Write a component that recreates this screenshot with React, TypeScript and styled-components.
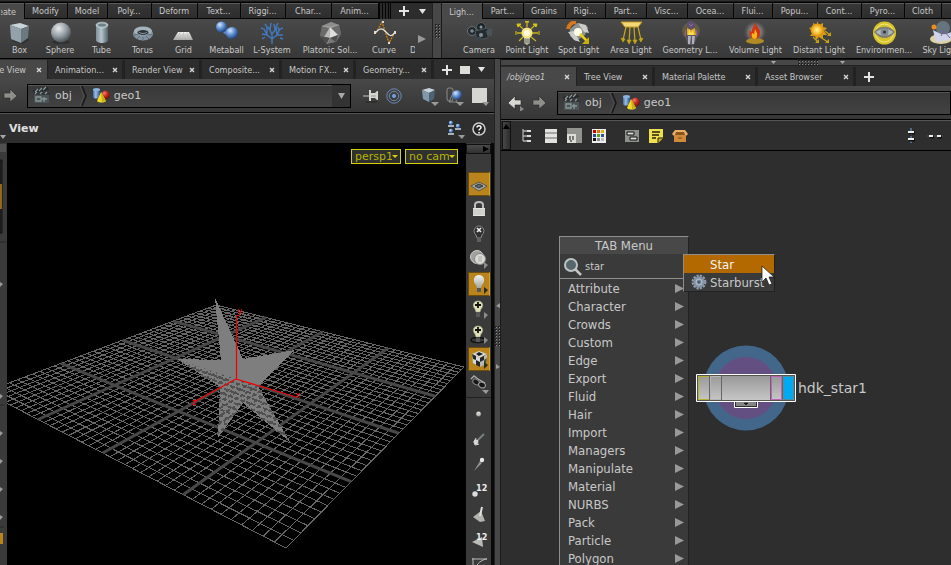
import React from 'react';
import styled, { createGlobalStyle, css } from 'styled-components';

const Global = createGlobalStyle`
  * { box-sizing: border-box; }
  html, body, #root { height: 100%; }
  body {
    margin: 0;
    overflow: hidden;
    background: #2e2e2e;
    color: #c8c8c8;
    font-family: "DejaVu Sans Condensed", "DejaVu Sans", sans-serif;
    font-size: 9px;
  }
  button, input, select { font: inherit; color: inherit; margin: 0; padding: 0; border: 0; background: none; }
  svg { display: block; flex: none; }
`;

/* ---------- frame ---------- */
const Frame = styled.div`
  height: 100vh;
  display: flex;
  flex-direction: column;
  overflow: hidden;
  background: #000;
`;
const Shelves = styled.div`
  flex: none;
  height: 59px;
  padding-top: 3px;
  border-bottom: 1px solid #000;
  background: linear-gradient(#2f302f 0 1px, #000 2px 3px, #000);
  display: grid;
  grid-template-columns: minmax(0, 432fr) 10px minmax(0, 509fr);
`;
const Shelf = styled.section`
  min-width: 0;
  display: flex;
  flex-direction: column;
  overflow: hidden;
`;
const ShelfTabs = styled.div`
  flex: none;
  height: 16px;
  display: flex;
  gap: 1px;
  background: #050505;
`;
const ShelfTab = styled.button<{ $w: number; $on?: boolean; $end?: boolean }>`
  flex: 0 0 ${p => p.$w}px;
  overflow: hidden;
  white-space: nowrap;
  display: flex;
  align-items: center;
  justify-content: ${p => (p.$end ? 'flex-end' : 'center')};
  padding-right: ${p => (p.$end ? 8 : 2)}px;
  border-top: 1px solid #5c5c5c;
  border-left: 1px solid ${p => (p.$on ? '#4b4b4b' : '#343434')};
  background: ${p => (p.$on ? '#494949' : 'linear-gradient(#363636, #2d2d2d)')};
  margin-bottom: ${p => (p.$on ? 0 : 1)}px;
`;
const TabGrip = styled.span`
  flex: 0 0 11px;
  background: repeating-linear-gradient(90deg, #050505 0 1px, #2a2a2a 1px 3px);
`;
const TabActions = styled.div`
  flex: 1;
  display: flex;
  align-items: center;
  gap: 10px;
  padding-left: 8px;
  background: #2c2c2c;
`;
const ShelfBody = styled.div<{ $pad?: number }>`
  flex: 1;
  display: flex;
  padding-left: ${p => p.$pad ?? 0}px;
  background: linear-gradient(#494949, #383838);
`;
const Tool = styled.button<{ $w: number }>`
  flex: 0 0 ${p => p.$w}px;
  display: flex;
  flex-direction: column;
  align-items: center;
  padding-top: 2px;
  white-space: nowrap;
  line-height: 10px;
`;
const CutTool = styled.span`
  width: 5px;
  margin-left: 7px;
  padding-top: 26px;
  line-height: 10px;
  overflow: hidden;
`;
const MoreButton = styled.button`
  display: flex;
  align-items: center;
  padding-left: 3px;
`;
const Splitter = styled.div<{ $h?: boolean }>`
  display: flex;
  flex-direction: ${p => (p.$h ? 'row' : 'column')};
  align-items: center;
  background: #474747;
  ${p => p.$h
    ? css`flex: none; height: 7px; gap: 22px; padding-left: 60%; border-top: 1px solid #111; border-bottom: 1px solid #222;`
    : css`justify-content: center; gap: 18px; border-left: 1px solid #222; border-right: 1px solid #1a1a1a;`}
`;
const PaneSplitter = styled(Splitter)`
  padding-top: 48px;
`;
const Workspace = styled.div`
  flex: 1;
  min-height: 0;
  display: grid;
  grid-template-columns: minmax(0, 494fr) 7px minmax(0, 450fr);
`;
const Pane = styled.section`
  min-width: 0;
  min-height: 0;
  display: flex;
  flex-direction: column;
  overflow: hidden;
`;

/* ---------- pane tabs ---------- */
const PaneTabs = styled.div`
  flex: none;
  height: 20px;
  padding-top: 1px;
  display: flex;
  background: #2d2d2d;
`;
const PaneTab = styled.div<{ $w: number; $on?: boolean; $end?: boolean }>`
  flex: 0 0 ${p => p.$w}px;
  display: flex;
  align-items: center;
  justify-content: space-between;
  overflow: hidden;
  white-space: nowrap;
  padding: 0 4px 0 7px;
  border-right: 3px solid #222;
  background: ${p => (p.$on ? '#484848' : '#2d2d2d')};
  ${p => p.$on && css`border-right-width: 1px; padding-left: 6px; padding-right: 6px;`}
  ${p => p.$end && css`justify-content: flex-end; gap: 10px; padding-left: 0; padding-right: 5px;`}
`;
const TabLabel = styled.button<{ $italic?: boolean }>`
  white-space: nowrap;
  font-style: ${p => (p.$italic ? 'italic' : 'normal')};
`;
const IconButton = styled.button`
  display: flex;
  align-items: center;
  justify-content: center;
  flex: none;
`;
const PaneActions = styled.div`
  display: flex;
  align-items: center;
  gap: 8px;
  padding-left: 8px;
`;

/* ---------- path bar ---------- */
const PathBar = styled.div`
  flex: none;
  height: 34px;
  display: flex;
  align-items: center;
  background: linear-gradient(#484848, #363636);
  border-bottom: 1px solid #000;
`;
const PathField = styled.div`
  flex: 1;
  min-width: 0;
  height: 24px;
  display: flex;
  align-items: stretch;
  border: 1px solid #000;
  box-shadow: inset 0 1px 0 #555;
  background: linear-gradient(#383838, #424242);
  font-family: "DejaVu Sans", sans-serif;
  font-size: 11px;
`;
const Crumb = styled.button`
  display: flex;
  align-items: center;
  gap: 4px;
  padding: 0 0 1px 4px;
`;
const CrumbGap = styled.span`
  padding-left: 6px;
`;
const PathDrop = styled.button`
  margin-left: auto;
  width: 18px;
  display: flex;
  align-items: center;
  justify-content: center;
  background: #333;
`;
const PathIcons = styled.div`
  display: flex;
  align-items: center;
  gap: 7px;
  padding: 0 5px 0 12px;
`;
const IconGap = styled.span`
  width: 5px;
`;
const ArrowPair = styled.div<{ $single?: boolean }>`
  display: flex;
  gap: 6px;
  padding: ${p => (p.$single ? '0 7px 0 2px' : '0 8px 0 6px')};
`;
const ToolRow = styled.div`
  flex: none;
  height: 30px;
  display: flex;
  align-items: center;
  background: #2e2e2e;
  border-top: 1px solid #555;
  overflow: hidden;
`;
const TitlePad = styled.span`
  flex: 0 0 9px;
  align-self: flex-end;
  padding-bottom: 4px;
`;
const ViewTitle = styled.h1`
  margin: 0;
  flex: 1;
  font-family: "DejaVu Sans", sans-serif;
  font-size: 11px;
  font-weight: bold;
  color: #e0e0e0;
`;
const ViewTools = styled.div`
  display: flex;
  align-items: center;
  gap: 7px;
  padding-right: 8px;
`;

/* ---------- viewport ---------- */
const ViewRow = styled.div`
  flex: 1;
  min-height: 0;
  display: flex;
  border-right: 3px solid #080808;
`;
const LeftStrip = styled.div`
  flex: 0 0 7px;
  background: #3a3a3a;
  overflow: hidden;
`;
const Viewport = styled.div`
  flex: 1;
  min-width: 0;
  position: relative;
  background: #000;
  & > svg { width: 100%; height: 100%; }
`;
const CameraBar = styled.div`
  position: absolute;
  top: 6px;
  right: 8px;
  display: flex;
  gap: 4px;
`;
const CameraBox = styled.label<{ $w: number }>`
  width: ${p => p.$w}px;
  height: 15px;
  display: flex;
  align-items: center;
  border: 1px solid #d2d200;
  background: #303030;
  color: #b4b400;
  font-family: "DejaVu Sans", sans-serif;
  font-size: 11px;
  padding: 0 2px 0 3px;
  select { appearance: none; flex: 1; min-width: 0; height: 13px; line-height: 13px; outline: 0; overflow: visible; }
`;
const DisplayStrip = styled.div`
  flex: 0 0 25px;
  display: flex;
  flex-direction: column;
  align-items: center;
  background: #3a3a3a;
  overflow: hidden;
`;
const StripCap = styled.button`
  flex: none;
  align-self: stretch;
  height: 10px;
  margin: 1px 0 18px;
  display: flex;
  justify-content: flex-end;
  align-items: center;
  padding-right: 1px;
  border: 1px solid #111;
  background: linear-gradient(#4a4a4a, #303030);
`;
const StripButton = styled.button<{ $on?: boolean }>`
  flex: none;
  width: 22px;
  height: 24px;
  margin-bottom: 1px;
  display: flex;
  align-items: center;
  justify-content: center;
  ${p => p.$on && css`background: #b9841b; border: 1px solid #6e4c0a; border-right-color: #dca030;`}
`;
const StripLine = styled.hr`
  flex: none;
  align-self: stretch;
  margin: 0 0 4px;
  border: 0;
  border-top: 1px solid #222;
`;

/* ---------- network ---------- */
const RowHandle = styled.button`
  flex: 0 0 9px;
  align-self: stretch;
  margin-left: 1px;
  padding-top: 2px;
  display: flex;
  align-items: flex-start;
  justify-content: center;
  border: 1px solid #111;
  background: linear-gradient(90deg, #484848, #2c2c2c);
`;
const ToolGroup = styled.div<{ $left: number }>`
  display: flex;
  align-items: center;
  gap: 8px;
  margin-left: ${p => p.$left}px;
`;
const RightGroup = styled.div`
  display: flex;
  gap: 8px;
  margin-left: auto;
  padding-right: 8px;
`;
const Network = styled.div`
  flex: 1;
  min-height: 0;
  position: relative;
  overflow: hidden;
  border-top: 1px solid #000;
  background: #2e2e2e;
`;
const Node = styled.div`
  position: absolute;
  left: 195px;
  top: 193px;
  display: flex;
  align-items: center;
  font-family: "DejaVu Sans", sans-serif;
  font-size: 14px;
  gap: 1px;
`;
const Menu = styled.div`
  position: absolute;
  left: 58px;
  top: 85px;
  width: 130px;
  background: #3a3a3a;
  border: 1px solid #8e8e8e;
  border-right-color: #222;
  font-size: 13px;
`;
const MenuTitle = styled.div`
  height: 17px;
  line-height: 17px;
  text-align: center;
  background: #484848;
`;
const Search = styled.label`
  height: 25px;
  display: flex;
  align-items: center;
  gap: 3px;
  padding-left: 3px;
  border-bottom: 1px solid #8e8e8e;
  font-size: 11px;
  input { flex: 1; min-width: 0; outline: 0; }
`;
const MenuItem = styled.button`
  width: 100%;
  height: 18px;
  display: flex;
  align-items: center;
  justify-content: space-between;
  padding: 0 4px 0 8px;
`;
const SubMenu = styled.div`
  position: absolute;
  left: 182px;
  top: 103px;
  width: 92px;
  background: #3a3a3a;
  border: 1px solid #8e8e8e;
  border-right-color: #222;
  border-bottom-color: #222;
  font-size: 13px;
`;
const SubItem = styled.button<{ $on?: boolean }>`
  width: 100%;
  height: 18px;
  display: grid;
  grid-template-columns: 16px 1fr;
  gap: 3px;
  padding-left: 7px;
  align-items: center;
  text-align: left;
  background: ${p => (p.$on ? '#b36800' : 'transparent')};
  color: ${p => (p.$on ? '#f2f2f2' : '#c8c8c8')};
`;
const Pointer = styled.div`
  position: absolute;
  left: 260px;
  top: 114px;
`;

/* ---------- icons ---------- */
const DefsSvg = styled.svg`
  position: absolute;
`;
const Defs = () => (
  <DefsSvg width="0" height="0" aria-hidden="true">
    <defs>
      <radialGradient id="ball" cx=".38" cy=".3" r=".75"><stop offset="0" stopColor="#e6eaec" /><stop offset=".5" stopColor="#99a2a8" /><stop offset="1" stopColor="#3e464c" /></radialGradient>
      <radialGradient id="blue" cx=".35" cy=".3" r=".75"><stop offset="0" stopColor="#d6e6ff" /><stop offset=".5" stopColor="#5c8cd0" /><stop offset="1" stopColor="#1c3a70" /></radialGradient>
      <radialGradient id="red" cx=".35" cy=".3" r=".75"><stop offset="0" stopColor="#f08070" /><stop offset=".5" stopColor="#c02a1c" /><stop offset="1" stopColor="#6a100a" /></radialGradient>
      <radialGradient id="sun"><stop offset="0" stopColor="#fff6a0" /><stop offset=".6" stopColor="#f6bc2c" /><stop offset="1" stopColor="#d88a10" /></radialGradient>
      <radialGradient id="glow"><stop offset="0" stopColor="#ffd0a0" stopOpacity=".8" /><stop offset=".6" stopColor="#aaa" stopOpacity=".45" /><stop offset="1" stopColor="#888" stopOpacity="0" /></radialGradient>
      <linearGradient id="tube"><stop offset="0" stopColor="#7d9099" /><stop offset=".45" stopColor="#b4c4ca" /><stop offset="1" stopColor="#52636c" /></linearGradient>
      <linearGradient id="pale" x2="0" y2="1"><stop offset="0" stopColor="#f2f2ee" /><stop offset="1" stopColor="#a4a4a0" /></linearGradient>
      <linearGradient id="btube"><stop offset="0" stopColor="#3f6ea8" /><stop offset=".4" stopColor="#9cc0e8" /><stop offset="1" stopColor="#28507c" /></linearGradient>
      <linearGradient id="body" x2="0" y2="1"><stop offset="0" stopColor="#999" /><stop offset="1" stopColor="#c6c6c6" /></linearGradient>
    </defs>
  </DefsSvg>
);
type Kids = { w: number; h?: number; children: React.ReactNode };
const Svg = ({ w, h = w, children }: Kids) => (
  <svg width={w} height={h} viewBox={`0 0 ${w} ${h}`} fill="none" aria-hidden="true">{children}</svg>
);

const shelfIcons: Record<string, React.ReactNode> = {
  Box: <><path d="M4 20l12 3 7-4-3-2z" fill="#252525" opacity=".5" /><path d="M3 4l10-2 9 3-8 3z" fill="#c9d4d8" /><path d="M3 4l11 4v14L4 18z" fill="#93a2aa" /><path d="M14 8l8-3-1 12-7 5z" fill="#6a7880" /></>,
  Sphere: <><ellipse cx="13" cy="21" rx="9" ry="2" fill="#222" opacity=".5" /><circle cx="13" cy="11.500" r="10" fill="url(#ball)" /></>,
  Tube: <><path d="M7 4v15c0 4 12 4 12 0V4z" fill="url(#tube)" /><ellipse cx="13" cy="4" rx="6" ry="2.800" fill="#aab9c0" stroke="#cfdadf" strokeWidth=".6" /><ellipse cx="13" cy="4" rx="4" ry="1.600" fill="#6f8089" /></>,
  Torus: <><ellipse cx="13" cy="13" rx="10" ry="6.500" fill="#8292a0" /><ellipse cx="13" cy="10" rx="9" ry="4.500" fill="#a5b3bd" /><ellipse cx="13" cy="11.500" rx="5.500" ry="2.500" fill="#2b3238" /><path d="M4 14l5-1M7 18l3-3M13 20v-4M19 18l-3-3M22 14l-5-1" stroke="#5f6e77" /><path d="M9 11c2 2 6 2 8 0" stroke="#8e9ca6" /></>,
  Grid: <><path d="M7 11h11l4 8H2z" fill="url(#pale)" /><path d="M9 11l-3 8M12.500 11v8M16 11l2 8M5 14h15" stroke="#bcbcb8" strokeWidth=".6" /></>,
  Metaball: <><path d="M8 7l9 7" stroke="#5c86c4" strokeWidth="6" /><circle cx="7.500" cy="6" r="5.500" fill="url(#blue)" /><circle cx="18" cy="12" r="6" fill="url(#blue)" /></>,
  'L-System': <path d="M12 23v-9M12 18L7 14 2 13M7 14L4 8 1 7M7 14l0-8-2-3M12 14l-2-5 1-7M10 9L8 6M12 18l5-4 6 0M17 14l3-6 3-1M17 14l-1-8 2-4M12 13l3-4-1-6M20 17l3 1M5 16l-3 2M19 9l-1-3" stroke="#4377ba" strokeWidth="1.500" />,
  'Platonic Sol...': <><path d="M4 5l9-4 8 3 2 9-5 8-9 2-7-8z" fill="#777" /><path d="M4 5l9-4 8 3-9 4z" fill="#8d8d8b" /><path d="M12 8l-8-3-2 10 7 2zM12 8l9-4 2 9-5 3z" fill="#6b6b69" /><path d="M12 6l-6 10 6 1z" fill="#b8b8b4" /><path d="M12 6v11l8-3z" fill="#dededa" /><path d="M2 15l7 8 3-6zM20 14l-2 7-6-4z" fill="#4d4d4b" /><path d="M4 5l8 1 9-2M12 17l-3 6" stroke="#aaa" strokeWidth=".6" /></>,
  Curve: <><path d="M4 12L10 1l7 21 6-11" stroke="#d4860c" strokeWidth="1.300" strokeDasharray="2 1" /><path d="M4 11c4-4 6-4 9-1s6 8 10 1" stroke="#e5e5e5" strokeWidth="1.200" /><g fill="#ddd"><path d="M2 10h2v3H2zM10 0h2v2h-2zM16 21h2v2h-2zM22 10h2v3h-2z" /></g></>,
  Camera: <><g transform="translate(0 1)"><circle cx="14" cy="5" r="4.500" fill="#1c2529" stroke="#566065" /><circle cx="5" cy="9" r="4.500" fill="#20292d" stroke="#697479" /><path d="M8 9l13-3v10l-11 2z" fill="#252c30" stroke="#4c575b" /><path d="M19 9l6-3v8l-5-1z" fill="#4b5559" /><circle cx="5" cy="9" r="1.800" fill="#7c878b" /><circle cx="14" cy="5" r="1.500" fill="#8b979b" /><path d="M7 15h7v4H7z" fill="#3b4549" /><circle cx="14" cy="13" r="2" fill="#849095" /></g></>,
  'Point Light': <><path d="M12 1v5M4 4l4 4M20 4l-4 4M2 12h5M23 12h-6M4 20l4-4M21 20l-5-4" stroke="#c8b414" strokeWidth="1.300" /><circle cx="12" cy="12" r="5.500" fill="#f6e789" /><circle cx="12" cy="12" r="3" fill="#fffce2" /><path d="M9 17h6v5l-3 2-3-2z" fill="#b8b8a4" /><path d="M9 19h6M9 21h6" stroke="#77776a" /><path d="M10 1h4l-2-1zM2 3l4 0-3 3zM22 3h-4l3 3zM1 10v4M24 10v4" fill="#d8c414" stroke="#d8c414" /></>,
  'Spot Light': <><path d="M2 8a8 8 0 018-7" stroke="#d97818" strokeWidth="4" /><path d="M4 8l7-6 11 4-3 8-9 6-6-5z" fill="#8e9292" /><path d="M12 2l8 2 3 8-5-1zM2 11l6 8 6 2-6-11z" fill="#cbcdca" /><circle cx="12" cy="11" r="4" fill="#fdfde8" /><path d="M14 13l7 7" stroke="#e6cf14" strokeWidth="2.500" /><path d="M23 16v7h-7z" fill="#c9ae10" /></>,
  'Area Light': <><path d="M2 1h21l-4 5H6z" fill="#f3d878" stroke="#c99b20" /><path d="M7 6L4 19M11 6l-1 15M15 6l1 15M19 6l3 13" stroke="#c8a914" strokeWidth="1.200" /><path d="M2 17l2 4 2-3zM8 19l2 4 2-4zM14 19l2 4 2-4zM20 18l2 3 2-4z" fill="#c8a914" stroke="#c8a914" strokeWidth=".6" /></>,
  'Geometry L...': <><circle cx="13" cy="10" r="9" fill="#c0a040" opacity=".25" /><circle cx="13" cy="4" r="4" fill="#5e5070" /><path d="M8 9l5-3 5 3 1 7-3 8h-6l-3-8z" fill="#5a5560" /><path d="M9 7l4 2 4-2 1 7H9z" fill="#e6a92a" /><path d="M11 8l2 4 2-3 1 5h-6z" fill="#fbe04a" /><path d="M10 15h3l-1 8h-2zM14 15h3l-1 8h-2z" fill="#aeb2bb" /><path d="M8 9l-1 6M18 9l1 6M11 3l2 2 2-2" stroke="#9868b5" /></>,
  'Volume Light': <><circle cx="12" cy="11" r="11" fill="url(#glow)" /><ellipse cx="12" cy="20" rx="9" ry="3" fill="#b18c25" /><path d="M12 1c1 5 6 6 5 11 0 5-3 6-5 6-4 0-7-4-5-9 1 2 2 2 2 1 0-3 2-4 3-9z" fill="#cf3414" /><path d="M12 8c1 3 3 4 2 7 0 2-1 3-2 3-3 0-4-3-3-6l2 1z" fill="#f7b31a" /></>,
  'Distant Light': <><path d="M10 0l2 4 4-2 0 4 4 1-3 3 3 4-4 0 0 4-4-2-3 3-1-4-5 0 3-4-4-4 4-1 0-4 4 2z" fill="#d99b16" /><circle cx="10" cy="9" r="6.500" fill="url(#sun)" /><path d="M6 16l5 5M13 16l8 5M18 10l5 4" stroke="#c9a30d" strokeWidth="1.400" /><path d="M12 18v4H8M22 18v4h-4M24 11v4h-4" fill="#c9a30d" /></>,
  'Environmen...': <><circle cx="12.500" cy="12" r="11.500" fill="#d8c42a" /><circle cx="12.500" cy="12" r="9" stroke="#f1e584" /><path d="M2 11C7 4 18 4 23 11c-6 8-15 8-21 0z" fill="#7d7d70" /><path d="M4 11c4-4 13-4 17 0-4 5-13 5-17 0z" fill="#b3b8bb" /><circle cx="12.500" cy="11" r="4" fill="#7f8b94" /><circle cx="12.500" cy="11" r="1.500" fill="#333" /></>,
  'Sky Light': <><circle cx="14" cy="7" r="7" fill="#6e808e" opacity=".8" /><ellipse cx="12" cy="18" rx="11" ry="5" fill="#dcd2a4" /><path d="M4 9l10 5 9-3-2 8-14 2z" fill="#d0d4ea" /><circle cx="5" cy="6" r="2.500" fill="#ee8d18" /><path d="M15 9l-3 6M15 10l6 7" stroke="#7160a0" /></>,
};
const Plus = () => <Svg w={10}><path d="M5 0v10M0 5h10" stroke="#e4e4e4" strokeWidth="2" /></Svg>;
const Down = ({ c = '#a8a8a8', w = 7, h = 5 }: { c?: string; w?: number; h?: number }) => <Svg w={w} h={h}><path d={`M0 0h${w}L${w / 2} ${h}z`} fill={c} /></Svg>;
const Tri = ({ s = 9, c = '#999' }: { s?: number; c?: string }) => <Svg w={s}><path d={`M0 0L${s} ${s / 2} 0 ${s}z`} fill={c} /></Svg>;
const Close = () => <Svg w={6}><path d="M1 1l4 4M5 1L1 5" stroke="#d5d5d5" strokeWidth="1.400" /></Svg>;
const Dots = ({ w, h }: { w: number; h: number }) => {
  const id = `d${w}x${h}`;
  return <Svg w={w} h={h}><pattern id={id} width="3" height="3" patternUnits="userSpaceOnUse"><path d="M0 0h2v2H0z" fill="#222" /><path d="M1 1h1v1H1z" fill="#888" /></pattern><rect width={w} height={h} fill={`url(#${id})`} /></Svg>;
};
const Arrow = ({ back, dim }: { back?: boolean; dim?: boolean }) => (
  <Svg w={18} h={16}><path d={back ? 'M1 8l7-7v4h6v5H8v4z' : 'M15 8L8 1v4H2v5h6v4z'} fill={dim ? '#8e8e8a' : '#d8d8d4'} stroke="#2a2a2a" strokeWidth=".6" />{back && <path d="M13 11l4 3-4 3z" fill="#888" />}</Svg>
);
const Clapper = () => (
  <Svg w={19} h={18}><path d="M2 8h15v9H2z" fill="#4a5355" /><path d="M2 8h16" stroke="#202526" /><path d="M1 4L16 1l1 3L2 7z" fill="#232829" /><path d="M3 6l3-3M7 5l3-3M11 4l3-3M3 8l2-2M8 8l2-2M13 8l2-2" stroke="#8f9898" strokeWidth="1.200" /><path d="M4 11h5v4H4zM10 13h5M12 11v5" stroke="#8a9696" strokeWidth="1.300" /></Svg>
);
const GeoIcon = () => (
  <Svg w={18} h={16}><path d="M1 2v8c0 2 7 2 7 0V2z" fill="url(#btube)" /><ellipse cx="4.500" cy="2.500" rx="3.500" ry="1.500" fill="#8bb3df" /><circle cx="13.500" cy="8" r="4.300" fill="url(#red)" /><path d="M9 5l5 9c-2 2-7 2-9 0z" fill="#f0dc28" /><path d="M9 5l5 9-4 1z" fill="#c9ad18" /></Svg>
);
const Chevron = () => <Svg w={10} h={22}><path d="M4 1l4 10-4 10" stroke="#181818" strokeWidth="1.500" /><path d="M2 1l4 10-4 10" stroke="#505050" /></Svg>;
const Pin = () => <Svg w={16} h={16}><path d="M6 2h2v3h4l2-2h1v9h-1l-2-2H8v3H6z" fill="#d5d5d1" /><path d="M0 8h6" stroke="#c9c9c9" /><path d="M3 14h11" stroke="#222" strokeWidth="2" opacity=".5" /><path d="M8 8h5" stroke="#999" /></Svg>;
const Target = () => <Svg w={16}><g stroke="#6f88b2"><circle cx="8" cy="8" r="7.200" /><circle cx="8" cy="8" r="4.700" /></g><circle cx="8" cy="8" r="2" fill="#6ca3e8" /></Svg>;
const CubeDrop = () => <Svg w={18} h={20}><path d="M1 4l7-2 6 2-6 3z" fill="#c7d3da" /><path d="M1 4l7 3v9l-6-3z" fill="#8199aa" /><path d="M8 7l6-3-1 9-5 3z" fill="#4d6272" /><path d="M10 16h8l-4 4z" fill="#999" /></Svg>;
const ShapesDrop = () => <Svg w={18} h={20}><rect x="1" y="2" width="6" height="13" rx="2" stroke="#8b8b8b" /><path d="M3 16l4-9 4 9z" stroke="#8b8b8b" /><circle cx="11" cy="9" r="4.800" fill="url(#blue)" /><path d="M10 16h8l-4 4z" fill="#999" /></Svg>;
const SquareDrop = () => <Svg w={18} h={20}><path d="M1 2h15v15H1z" fill="#d6d6d2" /><path d="M11 16h7l-3 4z" fill="#999" /></Svg>;
const People = () => <Svg w={18} h={20}>{[[4, 4], [4, 12], [11, 7]].map(([x, y]) => <g key={`${x}-${y}`}><circle cx={x} cy={y} r="2.200" fill="url(#blue)" /><path d={`M${x - 3} ${y + 3}h6`} stroke="#d5dce5" strokeWidth="1.500" /></g>)}<path d="M11 16h7l-3 4z" fill="#999" /></Svg>;
const Help = () => <Svg w={14}><circle cx="7" cy="7" r="6" fill="#252525" stroke="#d0d0d0" strokeWidth="1.500" /><path d="M5 5.500c0-2.500 4-2.500 4 0C9 7 7 7 7 8.500" stroke="#fff" strokeWidth="1.500" /><path d="M6.200 10h1.600v1.500H6.200z" fill="#fff" /></Svg>;
const Bulb = () => <><path d="M6 11C2 7 4 1 9 1s7 6 3 10l-1 3H7z" fill="url(#pale)" /><path d="M7 14h4v4H7z" fill="#55585a" /></>;
const Corner = ({ c = '#8d8d8d' }: { c?: string }) => <path d="M15 13l4 3-4 4z" fill={c} />;
const LitBulb = () => <><path d="M6 10C3 7 4 2 9 2s6 5 3 8l-1 3H7z" fill="#dfdfb8" stroke="#a5a58a" strokeWidth=".6" /><path d="M7 14h4v4H7z" fill="#55585a" /><path d="M9 3v6M6 6h6" stroke="#111" strokeWidth="1.800" /></>;

const strip: { name: string; on?: boolean; line?: boolean; art: React.ReactNode }[] = [
  { name: 'Construction plane', on: true, art: <><path d="M2 12l8-4 8 4-8 5z" fill="#a8aba9" stroke="#5a5548" /><path d="M6 12l4-2 4 2-4 2z" fill="#5d6a70" stroke="#2f3436" /></> },
  { name: 'Lock', art: <><path d="M6 10V6c0-4 8-4 8 0v4" stroke="#bcbcba" strokeWidth="2" /><path d="M4 9h12v8H4z" fill="#e3e3df" /><path d="M4 11h12M4 13h12M4 15h12" stroke="#b4b4b0" strokeWidth=".8" /></> },
  { name: 'Disable lighting', art: <><path d="M7 11C3 7 6 2 10 2s7 5 3 9l-1 3H8z" stroke="#898989" fill="#303030" /><path d="M8 4l4 4M12 4L8 8" stroke="#eee" strokeWidth="1.600" /><path d="M8 14h4v4H8z" fill="#62615d" /></> },
  { name: 'Material shading', art: <><circle cx="8" cy="8" r="6.500" fill="#9fa29f" stroke="#d0d0cd" /><circle cx="11" cy="10" r="5.500" fill="#d9d9d5" stroke="#878984" /><path d="M10 7v6M12 7v6" stroke="#abaaa6" /><Corner /></> },
  { name: 'Normal lighting', on: true, art: <><g transform="translate(1 0)"><Bulb /></g><Corner c="#2b2b22" /></> },
  { name: 'High quality lighting', art: <><LitBulb /><Corner /></> },
  { name: 'Lighting with shadows', art: <><ellipse cx="9" cy="16" rx="7" ry="2.500" stroke="#111" strokeWidth="1.500" /><LitBulb /><Corner /></> },
  { name: 'Display materials', on: true, art: <><path d="M3 5l7-3 8 3-7 4z" fill="#d5d7d2" /><path d="M3 5l8 4v9l-7-4z" fill="#d7d9d4" /><path d="M11 9l7-4-1 9-6 4z" fill="#4e5250" /><path d="M7 5l3-2 4 2-4 2z" fill="#1c1f21" /><path d="M3 5l4 2v4l-3-1zM7 11l4 2v5l-4-2zM11 9l4-2v4l-4 2z" fill="#242728" /><path d="M15 7l3-2v4l-3 2zM11 13l4-2v5l-4 2z" fill="#b5b8b3" /><Corner c="#2b2b22" /></> },
  { name: 'Visualizers', art: <><path d="M2 5l3-3 4 3 7 4" stroke="#aaa" strokeWidth="1.400" /><ellipse cx="7" cy="8" rx="3.500" ry="2.500" fill="#161616" stroke="#888" transform="rotate(30 7 8)" /><ellipse cx="13" cy="11" rx="3.500" ry="2.700" fill="#161616" stroke="#aaa" transform="rotate(30 13 11)" /><path d="M13 16h7l-3 4z" fill="#999" /></> },
  { name: 'Display points', line: true, art: <circle cx="9.500" cy="10" r="2.700" fill="url(#pale)" stroke="#222" strokeWidth=".5" /> },
  { name: 'Point normals', art: <><path d="M7 13l8-8" stroke="#77817c" strokeWidth="2" /><path d="M7 9l-2 4 1 3 4-1" stroke="#ddd" /><circle cx="7" cy="13" r="2.400" fill="#d5d7d2" /></> },
  { name: 'Point trails', art: <><path d="M5 17l6-10 2 2z" fill="#8d918e" /><circle cx="13" cy="6" r="2.200" fill="#e7e7e3" /></> },
  { name: 'Point numbers', art: <><circle cx="6" cy="15" r="2.700" fill="#ddd" /><text x="7" y="12" fill="#ececec" fontSize="9" fontWeight="bold">12</text></> },
  { name: 'Primitive normals', art: <><path d="M4 13l8-6 4 10-5 1z" fill="#b3b4b0" /><path d="M11 12l2-9" stroke="#e0e0dc" strokeWidth="2" /></> },
  { name: 'Primitive numbers', art: <><path d="M3 13l10-5 1 10z" fill="#bbbcb8" /><text x="7" y="11" fill="#ececec" fontSize="9" fontWeight="bold">12</text></> },
  { name: 'Primitive hulls', art: <><path d="M4 5h13M4 5v13M5 18C7 11 10 7 17 5" stroke="#bbb" /><path d="M3 4h2v2H3zM16 4h2v2h-2z" fill="#999" /></> },
];

/* ---------- 3D scene ---------- */
type Pt = [number, number];
const corners: Pt[] = [[216, 305], [464, 367], [286, 548], [-15, 392]];
const project = (() => {
  const [[x0, y0], [x1, y1], [x2, y2], [x3, y3]] = corners;
  const dx1 = x1 - x2, dx2 = x3 - x2, dx3 = x0 - x1 + x2 - x3;
  const dy1 = y1 - y2, dy2 = y3 - y2, dy3 = y0 - y1 + y2 - y3;
  const den = dx1 * dy2 - dx2 * dy1;
  const g = (dx3 * dy2 - dx2 * dy3) / den;
  const h = (dx1 * dy3 - dx3 * dy1) / den;
  return (u: number, v: number): Pt => {
    const w = g * u + h * v + 1;
    return [
      ((x1 - x0 + g * x1) * u + (x3 - x0 + h * x3) * v + x0) / w,
      ((y1 - y0 + g * y1) * u + (y3 - y0 + h * y3) * v + y0) / w,
    ];
  };
})();
const gridPath = (pick: (i: number) => boolean) => {
  let d = '';
  for (let i = 0; i <= 40; i++) {
    if (!pick(i)) continue;
    const t = i / 40;
    d += `M${project(t, 0)}L${project(t, 1)}M${project(0, t)}L${project(1, t)}`;
  }
  return d;
};
const isMajor = (i: number) => i % 10 === 0 && i !== 0 && i !== 40;
const minor = gridPath(i => !isMajor(i));
const major = gridPath(isMajor);
const starPath = 'M215 298L243 359 295 350 258 386 290 442 243 403 218 438 220 387 177 359 221 360z';

const Scene = () => (
  <svg viewBox="7 143 459 422" preserveAspectRatio="xMidYMin slice" fill="none" role="img" aria-label="Star geometry on the construction grid">
    <defs>
      <clipPath id="front"><path d="M170 357L236 379 266 389 310 460 200 460z" /></clipPath>
      <clipPath id="star"><path d={starPath} /></clipPath>
    </defs>
    <path d={minor} stroke="#666" shapeRendering="crispEdges" />
    <path d={major} stroke="#484848" strokeWidth="3" />
    <path d={starPath} fill="#7e7e7e" shapeRendering="crispEdges" />
    <g clipPath="url(#front)"><g clipPath="url(#star)"><path d={minor} stroke="#505050" strokeWidth="2" strokeDasharray="4 2" shapeRendering="crispEdges" /></g></g>
    <path d="M236.500 379V315M236 379L296 397M236 379L194 402" stroke="#f00000" strokeWidth="1.200" />
    <g fill="#f00000" fontSize="9" fontFamily="DejaVu Sans Mono, monospace">
      <text x="237" y="314">y</text><text x="295" y="398">x</text><text x="191" y="405">z</text>
    </g>
  </svg>
);

const LeftMarks = () => (
  <Svg w={7} h={422}>
    <path d="M0 1h6v8H0z" fill="#505050" /><path d="M0 17h2v73H0z" fill="#2b2b2b" stroke="#111" /><path d="M0 41h2v25H0z" fill="#936817" />
    {[141, 253, 290, 318, 346, 374].map(y => <path key={y} d={`M0 ${y - 2}l3 2-3 3z`} fill="#999" />)}
    <path d="M0 99h6M0 262h4M0 384h4" stroke="#262626" /><path d="M0 390h3v11H0z" fill="#b9841b" />
  </Svg>
);

/* ---------- content ---------- */
const leftTabs: [string, number][] = [['Create', 24], ['Modify', 42], ['Model', 39], ['Poly...', 43], ['Deform', 45], ['Text...', 42], ['Riggi...', 44], ['Char...', 45], ['Anim...', 46]];
const rightTabs: [string, number][] = [['Ligh...', 40], ['Part...', 40], ['Grains', 41], ['Rigi...', 39], ['Part...', 40], ['Visc...', 40], ['Ocea...', 45], ['Flui...', 38], ['Popu...', 44], ['Cont...', 43], ['Pyro...', 42], ['Cloth', 36], ['Solid', 40]];
const leftTools: [string, number][] = [['Box', 39], ['Sphere', 42], ['Tube', 41], ['Torus', 41], ['Grid', 41], ['Metaball', 45], ['L-System', 46], ['Platonic Sol...', 70], ['Curve', 38]];
const rightTools: [string, number][] = [['Camera', 46], ['Point Light', 50], ['Spot Light', 53], ['Area Light', 52], ['Geometry L...', 66], ['Volume Light', 65], ['Distant Light', 62], ['Environmen...', 68], ['Sky Light', 46]];
const leftPanes: [string, number][] = [['Scene View', 48], ['Animation...', 77], ['Render View', 77], ['Composite...', 80], ['Motion FX...', 74], ['Geometry...', 78]];
const rightPanes: [string, number][] = [['/obj/geo1', 76], ['Tree View', 78], ['Material Palette', 103], ['Asset Browser', 98]];
const menu = ['Attribute', 'Character', 'Crowds', 'Custom', 'Edge', 'Export', 'Fluid', 'Hair', 'Import', 'Managers', 'Manipulate', 'Material', 'NURBS', 'Pack', 'Particle', 'Polygon'];

const Tools = ({ items }: { items: [string, number][] }) => (
  <>{items.map(([name, w]) => <Tool key={name} $w={w}><Svg w={25} h={24}>{shelfIcons[name]}</Svg>{name}</Tool>)}</>
);
const Tabs = ({ items, cut, italic }: { items: [string, number][]; cut?: boolean; italic?: boolean }) => (
  <>{items.map(([name, w], i) => (
    <PaneTab key={name} $w={w} $on={i === 0} $end={cut && i === 0}>
      <TabLabel $italic={italic && i === 0}>{name}</TabLabel>
      <IconButton aria-label={`Close ${name}`}><Close /></IconButton>
    </PaneTab>
  ))}</>
);
const Path = ({ children }: { children?: React.ReactNode }) => (
  <PathField>
    <Crumb><Clapper />obj</Crumb>
    <CrumbGap><Chevron /></CrumbGap>
    <Crumb><GeoIcon />geo1</Crumb>
    {children}
  </PathField>
);

export default function App() {
  return (
    <Frame>
      <Global />
      <Defs />
      <Shelves>
        <Shelf>
          <ShelfTabs>
            {leftTabs.map(([name, w], i) => <ShelfTab key={name} $w={w} $on={i === 0} $end={i === 0}>{name}</ShelfTab>)}
            <TabGrip />
            <TabActions><IconButton aria-label="Add shelf"><Plus /></IconButton><IconButton aria-label="Shelf menu"><Down c="#e4e4e4" /></IconButton></TabActions>
          </ShelfTabs>
          <ShelfBody>
            <Tools items={leftTools} />
            <CutTool>Draw</CutTool>
            <MoreButton aria-label="More tools"><Tri s={8} /></MoreButton>
          </ShelfBody>
        </Shelf>
        <Splitter><Dots w={5} h={14} /></Splitter>
        <Shelf>
          <ShelfTabs>{rightTabs.map(([name, w], i) => <ShelfTab key={i} $w={w} $on={i === 0}>{name}</ShelfTab>)}</ShelfTabs>
          <ShelfBody $pad={14}><Tools items={rightTools} /></ShelfBody>
        </Shelf>
      </Shelves>

      <Workspace>
        <Pane>
          <PaneTabs>
            <Tabs items={leftPanes} cut />
            <PaneActions>
              <IconButton aria-label="New tab"><Plus /></IconButton>
              <IconButton aria-label="Maximize"><Svg w={10} h={8}><path d="M0 0h10v8H0z" fill="#deded8" /></Svg></IconButton>
              <IconButton aria-label="Pane menu"><Down c="#e4e4e4" /></IconButton>
            </PaneActions>
          </PaneTabs>
          <PathBar>
            <ArrowPair $single><IconButton aria-label="Forward"><Arrow dim /></IconButton></ArrowPair>
            <Path><PathDrop aria-label="Path history"><Down w={7} h={6} /></PathDrop></Path>
            <PathIcons>
              <IconButton aria-label="Pin"><Pin /></IconButton>
              <IconButton aria-label="Follow"><Target /></IconButton>
              <IconGap />
              <IconButton aria-label="Geometry"><CubeDrop /></IconButton>
              <IconButton aria-label="Objects"><ShapesDrop /></IconButton>
              <IconButton aria-label="Layout"><SquareDrop /></IconButton>
            </PathIcons>
          </PathBar>
          <ToolRow>
            <TitlePad><Down w={6} h={4} /></TitlePad>
            <ViewTitle>View</ViewTitle>
            <ViewTools><IconButton aria-label="Share view"><People /></IconButton><IconButton aria-label="Help"><Help /></IconButton></ViewTools>
          </ToolRow>
          <ViewRow>
            <LeftStrip><LeftMarks /></LeftStrip>
            <Viewport>
              <Scene />
              <CameraBar>
                <CameraBox $w={50}><select aria-label="View"><option>persp1</option></select><Down w={6} h={3} c="#d2d200" /></CameraBox>
                <CameraBox $w={53}><select aria-label="Camera"><option>no cam</option></select><Down w={6} h={3} c="#d2d200" /></CameraBox>
              </CameraBar>
            </Viewport>
            <DisplayStrip>
              <StripCap aria-label="Collapse toolbar"><Tri s={6} c="#000" /></StripCap>
              {strip.map(s => (
                <React.Fragment key={s.name}>
                  {s.line && <StripLine />}
                  <StripButton $on={s.on} aria-label={s.name}><Svg w={20}>{s.art}</Svg></StripButton>
                </React.Fragment>
              ))}
            </DisplayStrip>
          </ViewRow>
        </Pane>

        <PaneSplitter><Svg w={4} h={5}><path d="M4 0v5L0 3z" fill="#999" /></Svg><Dots w={5} h={20} /><Svg w={4} h={5}><path d="M0 0v5l4-2z" fill="#999" /></Svg></PaneSplitter>

        <Pane>
          <Splitter $h><Down w={5} h={3} /><Dots w={20} h={5} /><Down w={5} h={3} /></Splitter>
          <PaneTabs>
            <Tabs items={rightPanes} italic />
            <PaneActions><IconButton aria-label="New tab"><Plus /></IconButton></PaneActions>
          </PaneTabs>
          <PathBar>
            <ArrowPair><IconButton aria-label="Back"><Arrow back /></IconButton><IconButton aria-label="Forward"><Arrow dim /></IconButton></ArrowPair>
            <Path />
          </PathBar>
          <ToolRow>
            <RowHandle aria-label="Collapse toolbar"><Svg w={7} h={5}><path d="M0 5h7L3 0z" fill="#000" /></Svg></RowHandle>
            <ToolGroup $left={8}>
              <IconButton aria-label="Tree"><Svg w={16}><path d="M4 1v12M4 3h8M4 8h8M4 13h8" stroke="#aeb0ac" strokeWidth="1.300" /><path d="M8 2h4v2H8zM8 7h4v2H8zM8 12h4v2H8z" fill="#deded8" /></Svg></IconButton>
              <IconButton aria-label="List"><Svg w={16}><path d="M2 1h12v14H2z" fill="#e2e3de" /><path d="M2 5h12M2 10h12" stroke="#a5a8a2" strokeWidth="2" /></Svg></IconButton>
              <IconButton aria-label="Details"><Svg w={16}><path d="M0 0h15v15H0z" fill="#92938f" /><path d="M0 6h9v9H0z" fill="#deded9" /><path d="M2 9h2M5 9h2M2 11h2M5 11h2M3 13h2" stroke="#111" /></Svg></IconButton>
              <IconButton aria-label="Palette"><Svg w={16}><path d="M1 1h14v14H1z" fill="#eee" />{['#c80000', '#e07000', '#e8b010', '#2848a0', '#60a020', '#305890', '#111', '#888', '#bbb'].map((c, i) => <rect key={c} x={2 + (i % 3) * 4} y={2 + Math.floor(i / 3) * 4} width="3" height="3" fill={c} />)}</Svg></IconButton>
            </ToolGroup>
            <ToolGroup $left={17}>
              <IconButton aria-label="Network box"><Svg w={16}><path d="M1 2h14v12H1z" fill="#8d918e" /><path d="M3 4h7v3H3zM6 9h7v3H6z" fill="#d9dbd7" stroke="#111" /></Svg></IconButton>
              <IconButton aria-label="Sticky note"><Svg w={16}><path d="M1 1h14v9l-5 5H1z" fill="#f0df50" /><path d="M10 15v-5h5" fill="#c8ae20" stroke="#26220a" /><path d="M4 4h8M4 7h7M4 10h4" stroke="#26220a" strokeWidth="1.300" /></Svg></IconButton>
              <IconButton aria-label="Subnet"><Svg w={16}><path d="M3 2h10l3 4-2 2H2L0 6z" fill="#ecb064" /><path d="M2 7h12v7H2z" fill="#d28a3c" /><path d="M4 4h8l1 3H3z" fill="#8a5420" /><path d="M6 9h4v2H6z" fill="#a96825" /></Svg></IconButton>
            </ToolGroup>
            <RightGroup>
              <IconButton aria-label="Align vertically"><Svg w={16}><path d="M8 0v16" stroke="#6ea2e0" strokeDasharray="3 1" /><path d="M6 5h6M6 12h6" stroke="#111" strokeWidth="3" /><path d="M5 4h6M5 11h6" stroke="#eee" strokeWidth="2" /></Svg></IconButton>
              <IconButton aria-label="Align horizontally"><Svg w={16}><path d="M0 8h16" stroke="#555" /><path d="M3 9h4M11 9h4" stroke="#111" strokeWidth="3" /><path d="M2 8h4M10 8h4" stroke="#eee" strokeWidth="2" /></Svg></IconButton>
            </RightGroup>
          </ToolRow>
          <Network>
            <Node>
              <Svg w={101} h={88}>
                <circle cx="50" cy="44" r="42.500" fill="#43678a" /><circle cx="50" cy="44" r="31" fill="#644f83" />
                <path d="M38.500 56.500h23v7h-23z" fill="#2e2e2e" stroke="#fff" />
                <path d="M0.500 30.500h99v27h-99z" fill="#555" stroke="#fff" />
                <path d="M40 58h20v4H40z" fill="#858585" /><path d="M48 59h4l-2 2z" fill="#111" stroke="#111" strokeWidth=".5" />
                <path d="M2 32h96v24H2z" fill="url(#body)" /><path d="M2.500 32.500h11v23h-11z" stroke="#b5b52c" /><path d="M14.500 32.500h11v23h-11z" stroke="#b5b5b5" />
                <path d="M13.500 32v24M25.500 32v24M74.500 32v24M86.500 32v24" stroke="#666" /><path d="M75.500 32.500h10v23h-10z" stroke="#bd62bd" /><path d="M87.500 32.500h10v23h-10z" fill="#00aaf2" stroke="#4f8da1" />
              </Svg>
              <span>hdk_star1</span>
            </Node>
            <Menu role="menu">
              <MenuTitle>TAB Menu</MenuTitle>
              <Search>
                <Svg w={19}><circle cx="8" cy="8" r="6" fill="#56666b" stroke="#bcc3c4" strokeWidth="2" /><path d="M12 12l6 6" stroke="#c4c4c0" strokeWidth="2.500" /></Svg>
                <input aria-label="Search tools" defaultValue="star" />
              </Search>
              {menu.map(m => <MenuItem key={m} role="menuitem">{m}<Tri /></MenuItem>)}
            </Menu>
            <SubMenu role="menu">
              <SubItem $on role="menuitem"><span />Star</SubItem>
              <SubItem role="menuitem">
                <Svg w={16}><circle cx="8" cy="8" r="6.200" stroke="#8c9aaa" strokeWidth="2.500" strokeDasharray="2.200 1.050" /><circle cx="8" cy="8" r="5.500" fill="#8494a6" /><circle cx="8" cy="8" r="3" stroke="#b3c0cc" /><circle cx="8" cy="8" r="1.500" fill="#4d5966" /></Svg>Starburst
              </SubItem>
            </SubMenu>
            <Pointer><Svg w={14} h={20}><path d="M1 1v16l4-4 3 7 3-1-3-7h5z" fill="#fff" stroke="#111" strokeWidth=".7" /></Svg></Pointer>
          </Network>
        </Pane>
      </Workspace>
    </Frame>
  );
}
